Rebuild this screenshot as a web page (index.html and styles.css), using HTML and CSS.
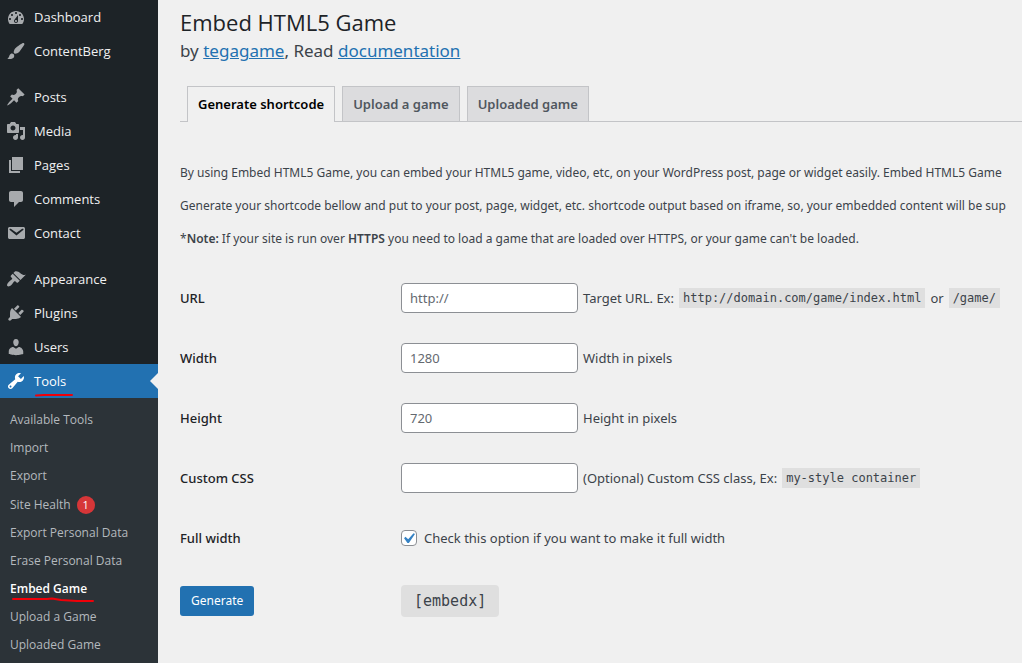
FILE: index.html
```html
<!DOCTYPE html>
<html lang="en">
<head>
<meta charset="utf-8">
<title>Embed HTML5 Game</title>
<link rel="stylesheet" href="styles.css">
</head>
<body>
<nav class="sidebar" aria-label="Main menu">
  <ul class="menu">
    <li><a class="menu-link" href="#"><svg class="icon" viewBox="0 0 20 20"><path d="M3.76 17h12.48C17.34 15.63 18 13.9 18 12c0-4.41-3.58-8-8-8s-8 3.59-8 8c0 1.9.66 3.63 1.76 5zM10 5c.55 0 1 .45 1 1s-.45 1-1 1-1-.45-1-1 .45-1 1-1zM6 7c.55 0 1 .45 1 1s-.45 1-1 1-1-.45-1-1 .45-1 1-1zm8 0c.55 0 1 .45 1 1s-.45 1-1 1-1-.45-1-1 .45-1 1-1zm-5.37 5.55L12 8v6c0 1.1-.9 2-2 2s-2-.9-2-2c0-.57.24-1.08.63-1.45zM4 11c.55 0 1 .45 1 1s-.45 1-1 1-1-.45-1-1 .45-1 1-1zm12 0c.55 0 1 .45 1 1s-.45 1-1 1-1-.45-1-1 .45-1 1-1zm-5 3c0-.55-.45-1-1-1s-1 .45-1 1 .45 1 1 1 1-.45 1-1z"/></svg>Dashboard</a></li>
    <li><a class="menu-link" href="#"><svg class="icon" viewBox="0 0 20 20"><path d="M18.33 3.57s.27-.8-.31-1.36c-.53-.52-1.22-.24-1.22-.24-.61.3-5.76 3.47-7.67 5.57-.86.96-2.06 3.79-1.09 4.82.92.98 3.96-.17 4.79-1 2.06-2.06 5.21-7.17 5.5-7.79zM1.4 17.65c2.37-1.56 1.46-3.41 3.23-4.64.93-.65 2.22-.62 3.08.29.63.67.8 2.57-.16 3.46-1.57 1.45-4 1.55-6.15.89z"/></svg>ContentBerg</a></li>
    <li class="group-start"><a class="menu-link" href="#"><svg class="icon" viewBox="0 0 20 20"><path d="M10.44 3.02l1.82-1.82 6.36 6.35-1.83 1.82c-1.05-.68-2.48-.57-3.41.36l-.75.75c-.92.93-1.04 2.35-.35 3.41l-1.83 1.82-2.41-2.41-2.8 2.79c-.42.42-3.38 2.71-3.8 2.29s1.86-3.39 2.28-3.81l2.79-2.79L4.1 9.36l1.83-1.82c1.05.69 2.48.57 3.4-.36l.75-.75c.93-.92 1.05-2.35.36-3.41z"/></svg>Posts</a></li>
    <li><a class="menu-link" href="#"><svg class="icon" viewBox="0 0 20 20"><path d="M13 11V4c0-.55-.45-1-1-1h-1.67L9 1H5L3.67 3H2c-.55 0-1 .45-1 1v7c0 .55.45 1 1 1h10c.55 0 1-.45 1-1zM7 4.5c1.38 0 2.5 1.12 2.5 2.5S8.38 9.5 7 9.5 4.5 8.38 4.5 7 5.62 4.5 7 4.5zM14 6h5v10.5c0 1.38-1.12 2.5-2.5 2.5S14 17.88 14 16.5s1.12-2.5 2.5-2.5c.17 0 .34.02.5.05V9h-3V6zm-4 8.05V13h2v3.5c0 1.38-1.12 2.5-2.5 2.5S7 17.88 7 16.5 8.12 14 9.5 14c.17 0 .34.02.5.05z"/></svg>Media</a></li>
    <li><a class="menu-link" href="#"><svg class="icon" viewBox="0 0 20 20"><path d="M6 15V2h11v13H6zm-1 1h9v2H3V5h2v11z"/></svg>Pages</a></li>
    <li><a class="menu-link" href="#"><svg class="icon" viewBox="0 0 20 20"><path d="M5 2h10c1.1 0 2 .9 2 2v7c0 1.1-.9 2-2 2h-2l-5 5v-5H5c-1.1 0-2-.9-2-2V4c0-1.1.9-2 2-2z"/></svg>Comments</a></li>
    <li><a class="menu-link" href="#"><svg class="icon" viewBox="0 0 20 20"><path d="M3.87 4h13.25C18.37 4 19 4.59 19 5.79v8.42c0 1.19-.63 1.79-1.88 1.79H3.87c-1.25 0-1.88-.6-1.88-1.79V5.79c0-1.2.63-1.79 1.88-1.79zm6.62 8.6l6.74-5.53c.24-.2.43-.66.13-1.07-.29-.41-.82-.42-1.17-.17l-5.7 3.86L4.8 5.83c-.35-.25-.88-.24-1.17.17-.3.41-.11.87.13 1.07z"/></svg>Contact</a></li>
    <li class="group-start"><a class="menu-link" href="#"><svg class="icon" viewBox="0 0 20 20"><path d="M14.48 11.06L7.41 3.99l1.5-1.5c.5-.56 2.3-.47 3.51.32 1.21.8 1.43 1.28 2.91 2.1 1.18.64 2.45 1.26 4.45.85zm-.71.71L6.7 4.7 4.93 6.47c-.39.39-.39 1.02 0 1.41l1.06 1.06c.39.39.39 1.03 0 1.42-.6.6-1.43 1.11-2.21 1.69-.35.26-.7.53-1.01.84C1.43 14.23.4 16.08 1.4 17.07c.99 1 2.84-.03 4.18-1.36.31-.31.58-.66.85-1.02.57-.78 1.08-1.61 1.69-2.21.39-.39 1.02-.39 1.41 0l1.06 1.06c.39.39 1.02.39 1.41 0z"/></svg>Appearance</a></li>
    <li><a class="menu-link" href="#"><svg class="icon" viewBox="0 0 20 20"><path d="M13.11 4.36L9.87 7.6 8 5.73l3.24-3.24c.35-.34 1.05-.2 1.56.32.52.51.66 1.21.31 1.55zm-8 1.77l.91-1.12 9.01 9.01-1.19.84c-.71.71-2.63 1.16-3.82 1.16H6.14L4.9 17.26c-.59.59-1.54.59-2.12 0-.59-.58-.59-1.53 0-2.12l1.24-1.24v-3.88c0-1.13.4-3.19 1.09-3.89zm7.26 3.97l3.24-3.24c.34-.35 1.04-.21 1.55.31.52.51.66 1.21.31 1.55l-3.24 3.25z"/></svg>Plugins</a></li>
    <li><a class="menu-link" href="#"><svg class="icon" viewBox="0 0 20 20"><path d="M10 9.25c-2.27 0-2.73-3.44-2.73-3.44C7 4.02 7.82 2 9.97 2c2.16 0 2.98 2.02 2.71 3.81 0 0-.41 3.44-2.68 3.44zm0 2.57L12.72 10c2.39 0 4.52 2.33 4.52 4.53v2.49s-3.65 1.13-7.24 1.13c-3.65 0-7.24-1.13-7.24-1.13v-2.49c0-2.25 1.94-4.48 4.47-4.48z"/></svg>Users</a></li>
    <li>
      <a class="menu-link current" href="#"><svg class="icon" viewBox="0 0 20 20"><path d="M16.68 9.77c-1.34 1.34-3.3 1.67-4.95.99l-5.41 6.52c-.99.99-2.59.99-3.58 0s-.99-2.59 0-3.57l6.52-5.42c-.68-1.65-.35-3.61.99-4.95 1.28-1.28 3.12-1.62 4.72-1.06l-2.89 2.89 2.82 2.82 2.86-2.87c.53 1.58.18 3.39-1.08 4.65zM3.81 16.21c.4.39 1.04.39 1.43 0 .4-.4.4-1.04 0-1.43-.39-.4-1.03-.4-1.43 0-.39.39-.39 1.03 0 1.43z"/></svg>Tools<svg class="mark mark-tools" viewBox="0 0 40 4"><path d="M2 2.4L10 2H38"/></svg></a>
      <ul class="submenu">
        <li><a href="#">Available Tools</a></li>
        <li><a href="#">Import</a></li>
        <li><a href="#">Export</a></li>
        <li><a href="#">Site Health <span class="badge">1</span></a></li>
        <li><a href="#">Export Personal Data</a></li>
        <li><a href="#">Erase Personal Data</a></li>
        <li><a class="active" href="#">Embed Game<svg class="mark mark-embed" viewBox="0 0 84 6"><path d="M2 2H36L41 1.4L50 3L66 4H82"/></svg></a></li>
        <li><a href="#">Upload a Game</a></li>
        <li><a href="#">Uploaded Game</a></li>
      </ul>
    </li>
  </ul>
</nav>
<main class="content">
  <h1>Embed HTML5 Game</h1>
  <p class="byline">by <a href="#">tegagame</a>, Read <a href="#">documentation</a></p>
  <nav class="tabs" aria-label="Sections">
    <a class="tab tab-active" href="#">Generate shortcode</a>
    <a class="tab" href="#">Upload a game</a>
    <a class="tab" href="#">Uploaded game</a>
  </nav>
  <div class="intro">
    <p>By using Embed HTML5 Game, you can embed your HTML5 game, video, etc, on your WordPress post, page or widget easily. Embed HTML5 Game</p>
    <p>Generate your shortcode bellow and put to your post, page, widget, etc. shortcode output based on iframe, so, your embedded content will be sup</p>
    <p>*<b>Note:</b> If your site is run over <b>HTTPS</b> you need to load a game that are loaded over HTTPS, or your game can't be loaded.</p>
  </div>
  <form class="form">
    <div class="row">
      <label class="name" for="url">URL</label>
      <div class="field"><input class="text" id="url" type="text" placeholder="http://"><span>Target URL. Ex:</span><code>http://domain.com/game/index.html</code><span>or</span><code>/game/</code></div>
    </div>
    <div class="row">
      <label class="name" for="width">Width</label>
      <div class="field"><input class="text" id="width" type="text" placeholder="1280"><span>Width in pixels</span></div>
    </div>
    <div class="row">
      <label class="name" for="height">Height</label>
      <div class="field"><input class="text" id="height" type="text" placeholder="720"><span>Height in pixels</span></div>
    </div>
    <div class="row">
      <label class="name" for="css">Custom CSS</label>
      <div class="field"><input class="text" id="css" type="text"><span>(Optional) Custom CSS class, Ex:</span><code>my-style container</code></div>
    </div>
    <div class="row">
      <span class="name">Full width</span>
      <label class="check"><span class="box"><input type="checkbox" checked><svg class="tick" viewBox="0 0 20 20"><path d="M14.83 4.89l1.34.94-5.81 8.38H9.02L5.78 9.67l1.34-1.25 2.57 2.4z"/></svg></span>Check this option if you want to make it full width</label>
    </div>
    <div class="row row-submit">
      <div><button class="button" type="button">Generate</button></div>
      <div><code class="output">[embedx]</code></div>
    </div>
  </form>
</main>
</body>
</html>
```
FILE: styles.css
```css
* {
  box-sizing: border-box;
}

body {
  display: flex;
  min-height: 100vh;
  margin: 0;
  overflow: hidden;
  background: #f0f0f0;
  color: #3c434a;
  font: 12px/20px "Noto Sans", "Open Sans", sans-serif;
}

a {
  color: #2271b1;
}

ul {
  margin: 0;
  padding: 0;
  list-style: none;
}

.sidebar {
  flex: 0 0 158px;
  background: #1d2327;
  font-family: "Open Sans", "Noto Sans", sans-serif;
}

.menu-link {
  position: relative;
  display: flex;
  align-items: center;
  gap: 8px;
  height: 34px;
  padding-left: 6px;
  color: #f0f0f1;
  font-size: 13px;
  text-decoration: none;
}

.group-start {
  margin-top: 12px;
}

.icon {
  width: 20px;
  height: 20px;
  fill: #a7aaad;
}

.current {
  background: #2271b1;
  color: #fff;
}

.current .icon {
  fill: #fff;
}

.current::after {
  content: "";
  position: absolute;
  top: 9px;
  right: 0;
  border: 8px solid transparent;
  border-left-width: 0;
  border-right-color: #f0f0f0;
}

.mark {
  position: absolute;
  fill: none;
  stroke: #f00008;
  stroke-width: 2;
  stroke-linecap: round;
  stroke-linejoin: round;
}

.mark-tools {
  left: 34px;
  bottom: 1px;
  width: 40px;
  height: 4px;
}

.mark-embed {
  left: 11px;
  bottom: 0;
  width: 84px;
  height: 6px;
}

.submenu {
  padding: 8px 0;
  background: #2c3338;
}

.submenu a {
  position: relative;
  display: flex;
  align-items: center;
  gap: 6px;
  min-height: 28px;
  padding: 5px 10px;
  color: #b4b9be;
  line-height: 18px;
  text-decoration: none;
}

.submenu .active {
  color: #fff;
  font-weight: 600;
}

.badge {
  width: 18px;
  height: 18px;
  margin-top: 1px;
  border-radius: 50%;
  background: #d63638;
  color: #fff;
  font-size: 11px;
  text-align: center;
}

.content {
  flex: 1;
  min-width: 0;
  padding: 8px 0 0 22px;
  white-space: nowrap;
}

h1 {
  margin: 0;
  color: #1d2327;
  font-family: "Open Sans", "Noto Sans", sans-serif;
  font-size: 22px;
  font-weight: 400;
  line-height: 29px;
}

.byline {
  margin: 0;
  font-size: 17px;
  line-height: 28px;
}

.tabs {
  display: flex;
  gap: 7px;
  margin-top: 21px;
  padding-left: 7px;
  border-bottom: 1px solid #c3c4c7;
}

.tab {
  padding: 5px 10px;
  border: 1px solid #c3c4c7;
  border-bottom: 0;
  background: #dcdcde;
  color: #50575e;
  font-size: 13px;
  font-weight: 600;
  line-height: 24px;
  text-decoration: none;
}

.tab-active {
  margin-bottom: -1px;
  background: #f0f0f0;
  color: #000;
}

.intro {
  margin-top: 41px;
}

.intro p {
  margin: 0 0 13px;
}

.intro b {
  font-weight: 600;
}

.form {
  margin-top: 19px;
  font-size: 13px;
}

.row {
  display: grid;
  grid-template-columns: 221px 1fr;
  align-items: center;
  min-height: 60px;
}

.row-submit {
  padding-top: 6px;
}

.name {
  color: #1d2327;
  font-weight: 500;
}

.field {
  display: flex;
  align-items: center;
  gap: 5px;
}

.text {
  width: 177px;
  height: 30px;
  padding: 0 8px;
  border: 1px solid #8c8f94;
  border-radius: 4px;
  background: #fff;
  color: #2c3338;
  font: inherit;
}

.text::placeholder {
  color: #646970;
}

code {
  padding: 0 4px;
  background: #dfdfdf;
  font: 12px/20px "DejaVu Sans Mono", monospace;
}

.check {
  display: flex;
  align-items: center;
  gap: 7px;
}

.box {
  position: relative;
  width: 16px;
  height: 16px;
}

.box input {
  display: block;
  width: 16px;
  height: 16px;
  margin: 0;
  appearance: none;
  border: 1px solid #8c8f94;
  border-radius: 4px;
  background: #fff;
}

.tick {
  position: absolute;
  top: -2px;
  left: -3px;
  width: 21px;
  height: 21px;
  fill: #3582c4;
}

.button {
  height: 30px;
  padding: 0 11px;
  border: 0;
  border-radius: 3px;
  background: #2271b1;
  color: #fff;
  font: 12px/30px "Noto Sans", "Open Sans", sans-serif;
}

.output {
  display: inline-block;
  padding: 6px 13px;
  border-radius: 4px;
  font-size: 15px;
}
```
